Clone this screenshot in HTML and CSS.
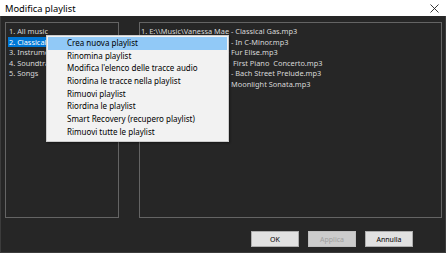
FILE: index.html
```html
<!DOCTYPE html>
<html lang="it">
<head>
  <meta charset="UTF-8" />
  <title>Modifica playlist</title>
  <link rel="stylesheet" href="styles.css">
</head>
<body>
  <div class="window">
    <div class="titlebar">
      <span class="title">Modifica playlist</span>
      <svg class="close" width="9" height="9" viewBox="0 0 9 9">
        <path d="M0.5 0.5 L8.5 8.5 M8.5 0.5 L0.5 8.5" stroke="#222" stroke-width="0.9" fill="none" />
      </svg>
    </div>

    <div class="content">
      <div class="panels">
        <!-- Playlist list -->
        <ul class="list list-left">
          <li>1. All music</li>
          <li class="selected">2. Classical</li>
          <li>3. Instrumental</li>
          <li>4. Soundtracks</li>
          <li>5. Songs</li>
        </ul>

        <!-- Tracks of the selected playlist -->
        <ul class="list list-right">
          <li>1. E:\\Music\Vanessa Mae - Classical Gas.mp3</li>
          <li>2. E:\\Music\Vanessa Mae - In C-Minor.mp3</li>
          <li>3. E:\\Music\Vanessa Mae Fur Elise.mp3</li>
          <li>4. E:\\Music\Vanessa Mae  First Piano  Concerto.mp3</li>
          <li>5. E:\\Music\Vanessa Mae - Bach Street Prelude.mp3</li>
          <li>6. E:\\Music\Vanessa Mae Moonlight Sonata.mp3</li>
        </ul>
      </div>

      <div class="buttons">
        <button class="btn">OK</button>
        <button class="btn" disabled>Applica</button>
        <button class="btn">Annulla</button>
      </div>
    </div>

    <!-- Context menu -->
    <ul class="menu">
      <li class="active">Crea nuova playlist</li>
      <li>Rinomina playlist</li>
      <li>Modifica l'elenco delle tracce audio</li>
      <li>Riordina le tracce nella playlist</li>
      <li>Rimuovi playlist</li>
      <li>Riordina le playlist</li>
      <li>Smart Recovery (recupero playlist)</li>
      <li>Rimuovi tutte le playlist</li>
    </ul>
  </div>
</body>
</html>
```

FILE: styles.css
```css
body {
  margin: 0;
  padding: 0;
  font-family: "Noto Sans", "Open Sans", sans-serif;
  background-color: #262626;
}

.window {
  position: relative;
  width: 446px;
  height: 253px;
  overflow: hidden;
}

.titlebar {
  height: 16px;
  background-color: #ffffff;
  display: flex;
  align-items: center;
  justify-content: space-between;
  padding: 0 7px 0 5px;
}

.title {
  font-size: 9.3px;
  color: #000;
}

.close {
  display: block;
}

.content {
  height: 237px;
  box-sizing: border-box;
  border: 1px solid #3c3c3c;
  border-top: none;
  background-color: #262626;
  padding: 6px 3px 0 4px;
}

.panels {
  display: flex;
  gap: 20px;
  height: 196px;
}

.list {
  list-style: none;
  margin: 0;
  padding: 3px 2px;
  box-sizing: border-box;
  border: 1.5px solid #646464;
  background-color: #262626;
  font-size: 7.4px;
  color: #d8d8d8;
  overflow: hidden;
}

.list li {
  height: 10.5px;
  line-height: 10.5px;
  padding-left: 1px;
  white-space: pre;
}

.list-left {
  width: 114px;
}

.list-right {
  flex: 1;
  padding-left: 1px;
}

.list-right li {
  padding-left: 0;
}

.selected {
  background-color: #0078d7;
  color: #fff;
}

.buttons {
  display: flex;
  justify-content: flex-end;
  gap: 9px;
  margin-top: 13px;
  padding-right: 29px;
}

.btn {
  width: 48px;
  height: 16px;
  padding: 0;
  font-family: inherit;
  font-size: 7px;
  color: #000;
  background-color: #e1e1e1;
  border: 1px solid #adadad;
}

.btn:disabled {
  background-color: #cccccc;
  border-color: #bfbfbf;
  color: #a0a0a0;
}

.menu {
  position: absolute;
  left: 46px;
  top: 35px;
  width: 183px;
  margin: 0;
  padding: 1px 1px 2px 1px;
  box-sizing: border-box;
  list-style: none;
  background-color: #f2f2f2;
  border: 1px solid #cccccc;
  box-shadow: 1px 1px 2px rgba(0, 0, 0, 0.4);
  font-size: 8px;
  color: #000;
  white-space: nowrap;
}

.menu li {
  height: 12.7px;
  line-height: 12.7px;
  padding-left: 19px;
}

.menu .active {
  background-color: #91c9f7;
}
```
